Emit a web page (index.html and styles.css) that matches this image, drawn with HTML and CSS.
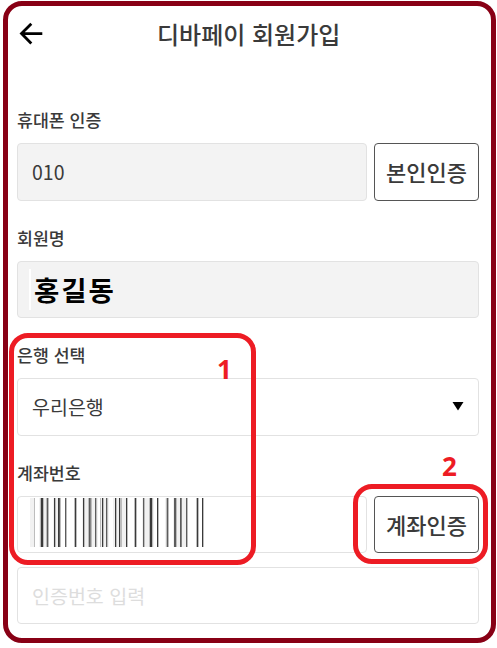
FILE: index.html
```html
<!DOCTYPE html>
<html lang="ko">
<head>
    <meta charset="UTF-8">
    <title>디바페이 회원가입</title>
    <link rel="stylesheet" href="styles.css">
</head>
<body>
    <div class="container">
        <header class="header">
            <svg class="back" width="24" height="24" viewBox="0 0 24 24">
                <path d="M12.3 1.8L2.5 11.6l9.8 9.8M2.7 11.6H23.3" fill="none" stroke="#000" stroke-width="2.8"/>
            </svg>
            <h1>디바페이 회원가입</h1>
        </header>
        <form class="form">
            <div class="group">
                <label>휴대폰 인증</label>
                <div class="row">
                    <div class="field disabled">010</div>
                    <button type="button">본인인증</button>
                </div>
            </div>
            <div class="group">
                <label>회원명</label>
                <div class="field disabled name"><span>홍길동</span></div>
            </div>
            <div class="group">
                <label>은행 선택</label>
                <div class="field select">
                    <span>우리은행</span>
                    <svg width="12" height="9" viewBox="0 0 12 9"><path d="M0.5 0h11L6 8.6z"/></svg>
                </div>
            </div>
            <div class="group">
                <label>계좌번호</label>
                <div class="row">
                    <div class="field account">
                        <svg width="176" height="49" viewBox="30 0 176 49" shape-rendering="crispEdges">
                            <path d="M30 0h5v49h-5zM39 0h10v49h-10zM53 0h8v49h-8zM82 0h16v49h-16zM100 0h9v49h-9zM113 0h15v49h-15zM142 0h12v49h-12zM165 0h4v49h-4zM173 0h15v49h-15z" fill="#f1f1f1"/>
                            <path d="M34.5 0v49M40.5 0v49M43.5 0v49M46.5 0v49M48.5 0v49M55.5 0v49M60.5 0v49M66.5 0v49M74.5 0v49M76.5 0v49M84.5 0v49M88.5 0v49M91.5 0v49M96.5 0v49M100.5 0v49M103.5 0v49M107.5 0v49M116.5 0v49M120.5 0v49M121.5 0v49M127.5 0v49M134.5 0v49M136.5 0v49M144.5 0v49M149.5 0v49M152.5 0v49M158.5 0v49M166.5 0v49M168.5 0v49M176.5 0v49M181.5 0v49M187.5 0v49M196.5 0v49M198.5 0v49M203.5 0v49" stroke="#bdbdbd"/>
                            <path d="M90 0v49M181 0v49" stroke="#858585" stroke-width="2"/>
                            <path d="M47.5 0v49M59.5 0v49M65.5 0v49M89.5 0v49M95.5 0v49M106.5 0v49M143.5 0v49M167.5 0v49M174.5 0v49M175.5 0v49M180.5 0v49M186.5 0v49" stroke="#5c5c5c"/>
                            <path d="M41.5 0v49M42.5 0v49M54.5 0v49M58.5 0v49M75.5 0v49M83.5 0v49M102.5 0v49M115.5 0v49M119.5 0v49M126.5 0v49M135.5 0v49M150.5 0v49M151.5 0v49M157.5 0v49M197.5 0v49M202.5 0v49" stroke="#3a3a3a"/>
                        </svg>
                    </div>
                    <button type="button">계좌인증</button>
                </div>
                <div class="field code">인증번호 입력</div>
            </div>
        </form>
    </div>
    <!-- step markers -->
    <div class="mark mark-bank"></div>
    <div class="mark mark-verify"></div>
    <span class="num num-1">1</span>
    <span class="num num-2">2</span>
</body>
</html>
```

FILE: styles.css
```css
* {
    box-sizing: border-box;
}
body {
    margin: 0;
    padding: 1px 1px 5px 3px;
    height: 648px;
    position: relative;
    overflow: hidden;
    background-color: #fff;
    font-family: "Noto Sans CJK KR", sans-serif;
    color: #3a3a3a;
}
.container {
    width: 493px;
    height: 642px;
    padding: 0 12px 0 9px;
    border: 5px solid #880015;
    border-radius: 19px;
}
.header {
    display: flex;
    align-items: center;
    height: 56px;
    padding-left: 2px;
}
.back {
    flex: none;
}
h1 {
    margin: 0 0 0 114px;
    font-size: 24px;
    line-height: 36px;
    font-weight: 500;
    white-space: nowrap;
}
.form {
    display: flex;
    flex-direction: column;
    gap: 24px;
    padding-top: 45px;
}
.group {
    display: flex;
    flex-direction: column;
}
label {
    height: 36px;
    line-height: 26px;
    font-size: 17.3px;
    font-weight: 500;
}
.row {
    display: flex;
    gap: 7px;
}
.field {
    display: flex;
    align-items: center;
    flex: 1;
    min-height: 58px;
    padding: 0 14px 1px;
    border: 1px solid #e2e2e2;
    border-radius: 4px;
    font-size: 19.5px;
}
.disabled {
    background-color: #f3f3f3;
}
.name {
    padding-left: 11px;
    min-height: 57px;
}
.name span {
    padding-left: 3px;
    border-left: 2px solid #fff;
    line-height: 41px;
    font-size: 27.5px;
    font-weight: 700;
    letter-spacing: 2px;
    color: #000;
}
.select {
    justify-content: space-between;
}
.account {
    align-items: flex-start;
    min-height: 57px;
    padding: 1px 12px;
}
.code {
    margin-top: 14px;
    min-height: 57px;
    color: #ddd;
}
button {
    width: 105px;
    padding: 0 0 2px;
    border: 1px solid #555;
    border-radius: 4px;
    background-color: #fff;
    color: #3a3a3a;
    font-family: inherit;
    font-size: 22px;
    font-weight: 500;
}
.mark {
    position: absolute;
    border: 5px solid #ed1c24;
    border-radius: 19px;
}
.mark-bank {
    left: 9px;
    top: 333px;
    width: 247px;
    height: 232px;
}
.mark-verify {
    left: 353px;
    top: 484px;
    width: 135px;
    height: 80px;
}
.num {
    position: absolute;
    font-family: "Open Sans", sans-serif;
    font-size: 26px;
    line-height: 36px;
    font-weight: 700;
    color: #ed1c24;
}
.num-1 {
    left: 217px;
    top: 351px;
}
.num-2 {
    left: 442px;
    top: 448px;
}
```
